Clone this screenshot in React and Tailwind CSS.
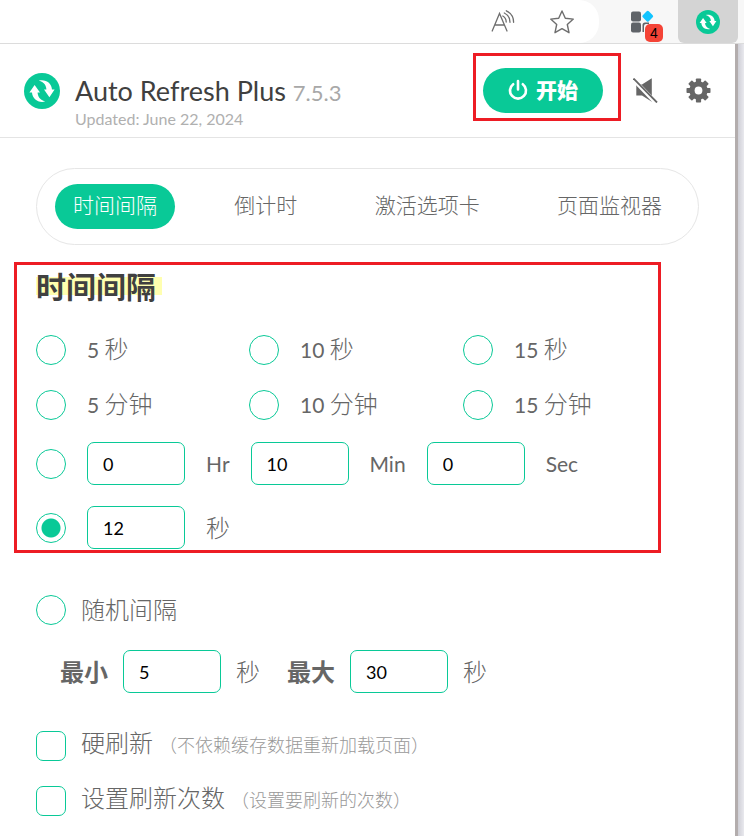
// Auto Refresh Plus — 扩展弹窗
import { useState } from 'react'

const PRESETS = [
  ['5', '秒'], ['10', '秒'], ['15', '秒'],
  ['5', '分钟'], ['10', '分钟'], ['15', '分钟'],
]
const TABS = ['时间间隔', '倒计时', '激活选项卡', '页面监视器']

function Logo({ className }) {
  return (
    <svg viewBox="0 0 36 36" className={className} aria-hidden="true">
      <circle cx="18" cy="18" r="18" fill="#09c997" />
      <g fill="#fff">
        <path d="M10.6 12 L16 19.6 H13.6 C13.7 23.6 16 27 21.2 28.6 C14 30.2 8.4 26 8 19.6 H5.4 Z" />
        <path d="M25.4 24.2 L20 16.6 H22.4 C22.3 12.6 20 9.2 14.8 7.6 C22 6 27.6 10.2 28 16.6 H30.6 Z" />
      </g>
    </svg>
  )
}

function BrowserBar() {
  return (
    <div className="flex h-11 items-start border-b border-[#dcdcdc] bg-[#f7f7f7]">
      <div className="flex h-[43px] flex-1 items-center justify-end gap-[34px] rounded-r-[20px] bg-white pr-6 text-[#6e6e6e]">
        <button aria-label="朗读此页内容">
          <svg width="25" height="24" viewBox="0 0 25 24" fill="none" stroke="currentColor" strokeWidth="1.3" strokeLinecap="round" className="block">
            <path d="M2.200 21 L9.500 3.500 L17 21 M4.800 15 H14.300" />
            <path d="M14.300 3 C18 4.800 20 8.200 20 12.300 M16.300 0.800 C21 3 23.600 7.300 23.600 12.300" />
            <path d="M12.800 6 C15 7.200 16.200 9.500 16.200 12" />
          </svg>
        </button>
        <button aria-label="收藏">
          <svg width="26" height="26" viewBox="0 0 26 26" fill="none" stroke="currentColor" strokeWidth="1.4" strokeLinejoin="round" className="block">
            <path d="M13 2 L16.300 9.200 L24.300 10.100 L18.300 15.500 L20 23.700 L13 19.700 L6 23.700 L7.700 15.500 L1.700 10.100 L9.700 9.200 Z" />
          </svg>
        </button>
      </div>
      <button aria-label="扩展" className="relative ml-8 mt-2 mr-[13px]">
        <svg width="34" height="28" viewBox="0 0 34 28" className="block">
          <g fill="#5f6368">
            <rect x="0" y="3.500" width="10" height="10" rx="2" />
            <rect x="0" y="14.500" width="10" height="10" rx="2" />
            <path d="M11.500 24 V17 Q11.500 14.500 14 14.500 H18 V16 H15 Q13 16 13 18 V24 Z" />
          </g>
          <rect x="12.500" y="4" width="8.500" height="8.500" rx="1.500" fill="#12c4ff" transform="rotate(45 16.750 8.250)" />
        </svg>
        <span className="absolute left-3.5 top-4 flex h-[18px] w-[18px] items-center justify-center rounded-[5px] bg-[#f44336] font-['Liberation_Sans'] text-sm text-black">4</span>
      </button>
      <button aria-label="Auto Refresh Plus" className="mr-1.5 flex h-[43px] w-[60px] items-center justify-center rounded-b-md bg-[#d4d4d4]">
        <Logo className="h-6 w-6" />
      </button>
    </div>
  )
}

function Header() {
  return (
    <header className="flex h-[94px] items-center border-b border-[#e4e4e4] pl-6 pr-6">
      <Logo className="h-9 w-9" />
      <div className="ml-[15px] flex-1 pt-[22px]">
        <h1 className="text-[27px] leading-8 text-[#404040]">
          Auto Refresh Plus <span className="text-[22px] leading-8 text-[#a8a8a8]">7.5.3</span>
        </h1>
        <p className="text-base leading-5 text-[#b0b0b0]">Updated: June 22, 2024</p>
      </div>
      <div className="mb-2 border-3 border-[#ed1c24] pt-3 pb-[5px] pl-[7px] pr-[15px]">
        <button className="flex h-[45px] w-[120px] items-center justify-center gap-2 rounded-full bg-[#09c997] text-[21px] font-black text-white">
          <svg width="20" height="22" viewBox="0 0 20 22" fill="none" stroke="#fff" strokeWidth="2.600" strokeLinecap="round">
            <path d="M10 2 V10.500 M5.200 5.200 A8 8 0 1 0 14.800 5.200" />
          </svg>
          开始
        </button>
      </div>
      <button aria-label="静音" className="ml-3 text-[#666]">
        <svg width="25" height="25" viewBox="0 0 25 25" className="block">
          <path d="M3.300 6.500 H9 L18.800 0.200 V23.800 L9 17.500 H3.300 Z" fill="currentColor" />
          <path d="M-0.500 0.500 L23 25" stroke="#fff" strokeWidth="4.200" />
          <path d="M0.500 0.500 L24 24.500" stroke="currentColor" strokeWidth="1.800" />
        </svg>
      </button>
      <button aria-label="设置" className="ml-7 text-[#666]">
        <svg width="25" height="25" viewBox="-12.5 -12.5 25 25" className="block">
          <g fill="currentColor">
            {[0, 45, 90, 135].map(a => <rect key={a} x="-2.600" y="-12" width="5.200" height="24" rx="0.800" transform={`rotate(${a})`} />)}
            <circle r="9.200" />
          </g>
          <circle r="3.900" fill="#fff" />
        </svg>
      </button>
    </header>
  )
}

function Radio({ id, value, onPick, label }) {
  return (
    <input
      type="radio" name="interval" id={id} aria-label={label} checked={value === id} onChange={() => onPick(id)}
      className="m-0 block h-[30px] w-[30px] shrink-0 appearance-none rounded-full border border-[#09c997] bg-white checked:bg-[radial-gradient(circle,#09c997_9px,transparent_10px)]"
    />
  )
}

function NumberBox({ label, value }) {
  return (
    <input
      type="text" inputMode="numeric" aria-label={label} defaultValue={value}
      className="h-[43px] w-[98px] shrink-0 rounded-[7px] border border-[#09c997] bg-white px-[15px] text-lg font-normal text-black"
    />
  )
}

function CheckRow({ id, label, hint }) {
  return (
    <div className="flex h-[30px] items-center gap-[15px]">
      <input type="checkbox" id={id} className="h-[30px] w-[30px] shrink-0 appearance-none rounded-[7px] border border-[#09c997] bg-white checked:bg-[#09c997]" />
      <label htmlFor={id} className="pb-1 text-2xl leading-[26px] font-light">
        {label}
        <span className="ml-1.5 text-lg leading-[26px] text-[#999]">{hint}</span>
      </label>
    </div>
  )
}

export default function App() {
  const [tab, setTab] = useState(TABS[0])
  const [picked, setPicked] = useState('custom')

  return (
    <div className="flex min-h-screen flex-col bg-white font-[Lato,'Noto_Sans_CJK_SC',sans-serif] text-[#666]" lang="zh-CN">
      <BrowserBar />
      <div className="flex flex-1">
        <div className="min-w-0 flex-1">
          <Header />
          <main className="pl-9 pr-9 pt-[30px] pb-5">
            <nav className="flex h-[77px] items-center justify-between rounded-full border border-[#e6e6e6] px-[18px]">
              {TABS.map(t => (
                <button
                  key={t} onClick={() => setTab(t)}
                  className={`h-[45px] rounded-full px-[18px] pb-[3px] text-[21px] font-light whitespace-nowrap ${t === tab ? 'bg-[#09c997] text-white' : ''}`}
                >
                  {t}
                </button>
              ))}
            </nav>

            <section className="-ml-[22px] mr-[38px] mt-[17px] border-3 border-[#ed1c24] pl-[19px] pt-px pb-px">
              <h2 className="text-3xl leading-10 font-bold text-[#404040]">
                <span className="inline-block bg-[linear-gradient(transparent_11px,#ffffb0_11px,#ffffb0_29px,transparent_29px)] pr-1.5">时间间隔</span>
              </h2>
              <div className="mt-[29px] grid grid-cols-[213px_214px_1fr] gap-y-[25px]">
                {PRESETS.map(([n, unit]) => (
                  <div key={n + unit} className="flex h-[30px] items-center gap-[21px]">
                    <Radio id={n + unit} value={picked} onPick={setPicked} />
                    <label htmlFor={n + unit} className="pb-0.5 text-[21px] leading-7 whitespace-nowrap">
                      {n} <span className="text-2xl leading-7 font-light">{unit}</span>
                    </label>
                  </div>
                ))}
              </div>
              <div className="mt-[22px] flex items-center gap-[21px] text-[21px]">
                <Radio id="hms" value={picked} onPick={setPicked} label="时分秒" />
                <NumberBox label="Hr" value="0" />
                <span>Hr</span>
                <NumberBox label="Min" value="10" />
                <span>Min</span>
                <NumberBox label="Sec" value="0" />
                <span>Sec</span>
              </div>
              <div className="mt-[21px] flex items-center gap-[21px]">
                <Radio id="custom" value={picked} onPick={setPicked} label="自定义秒数" />
                <NumberBox label="秒" value="12" />
                <span className="text-2xl font-light">秒</span>
              </div>
            </section>

            <div className="mt-[42px] flex items-center gap-[15px]">
              <Radio id="random" value={picked} onPick={setPicked} />
              <label htmlFor="random" className="text-2xl leading-[30px] font-light">随机间隔</label>
            </div>
            <div className="mt-[25px] flex items-center gap-[15px] pl-6 text-2xl font-light">
              <span className="font-bold">最小</span>
              <NumberBox label="最小" value="5" />
              <span>秒</span>
              <span className="ml-3 font-bold">最大</span>
              <NumberBox label="最大" value="30" />
              <span>秒</span>
            </div>

            <div className="mt-[38px] flex flex-col gap-[25px]">
              <CheckRow id="hard" label="硬刷新" hint="（不依赖缓存数据重新加载页面）" />
              <CheckRow id="times" label="设置刷新次数" hint="（设置要刷新的次数）" />
            </div>
          </main>
        </div>
        <div className="w-[9px] border-l-3 border-[#b3adad] bg-linear-to-r from-[#cfcfd6] to-[#e9e9ee]" />
      </div>
    </div>
  )
}
